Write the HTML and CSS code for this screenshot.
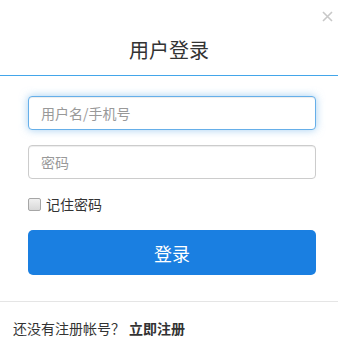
FILE: index.html
```html
<!DOCTYPE html>
<html lang="zh-CN">
<head>
<meta charset="utf-8">
<title>用户登录</title>
<link rel="stylesheet" href="styles.css">
</head>
<body>
<div class="modal">
  <div class="modal-header">
    <h2 class="title">用户登录</h2>
    <span class="close"><svg width="11" height="11" viewBox="0 0 11 11"><path d="M1 1L10 10M10 1L1 10" stroke="#c8c8c8" stroke-width="1.6" fill="none"/></svg></span>
  </div>
  <form class="modal-body">
    <input class="field focus" type="text" placeholder="用户名/手机号">
    <input class="field" type="password" placeholder="密码">
    <label class="remember"><input class="check" type="checkbox"><span>记住密码</span></label>
    <button class="btn" type="button">登录</button>
  </form>
  <div class="modal-footer">
    <span class="hint">还没有注册帐号？</span><a class="reg" href="#">立即注册</a>
  </div>
</div>
</body>
</html>
```
FILE: styles.css
```css
* { box-sizing: border-box; }
html, body { margin: 0; padding: 0; background: #fff; }
body {
  font-family: "Noto Sans CJK SC", "Microsoft YaHei", sans-serif;
  color: #333;
  width: 338px;
  height: 347px;
  overflow: hidden;
}
.modal { width: 338px; }
.modal-header {
  position: relative;
  height: 76px;
  padding-top: 32px;
  border-bottom: 1px solid #43a6ea;
}
.title {
  margin: 0;
  font-size: 20px;
  font-weight: normal;
  line-height: 36px;
  text-align: center;
  color: #333;
}
.close {
  position: absolute;
  right: 5px;
  top: 11px;
  width: 11px;
  height: 11px;
  display: block;
}
.close svg { display: block; }
.modal-body {
  display: flex;
  flex-direction: column;
  margin: 0;
  padding: 20px 22px 0 28px;
}
.field {
  height: 34px;
  width: 288px;
  padding: 6px 12px;
  font-family: inherit;
  font-size: 14px;
  color: #555;
  border: 1px solid #ccc;
  border-radius: 4px;
  outline: none;
  box-shadow: inset 0 1px 1px rgba(0,0,0,.075);
}
.field + .field { margin-top: 15px; }
.field::placeholder { color: #999; }
.field.focus {
  border-color: #66afe9;
  box-shadow: inset 0 1px 1px rgba(0,0,0,.075), 0 0 8px rgba(102,175,233,.6);
}
.remember {
  display: flex;
  align-items: center;
  gap: 5px;
  margin-top: 15px;
  height: 20px;
  font-size: 14px;
  color: #333;
}
.check {
  appearance: none;
  -webkit-appearance: none;
  margin: 0;
  width: 13px;
  height: 13px;
  border: 1px solid #a6a6a6;
  border-radius: 2px;
  background: linear-gradient(#f0f0f0, #d8d8d8);
}
.btn {
  margin-top: 16px;
  height: 45px;
  width: 288px;
  border: none;
  border-radius: 5px;
  background: #1a7fe1;
  color: #fff;
  font-family: inherit;
  font-size: 18px;
}
.modal-footer {
  margin-top: 26px;
  border-top: 1px solid #e5e5e5;
  padding: 16px 0 0 13px;
  font-size: 14px;
  line-height: 20px;
  display: flex;
  gap: 4px;
}
.hint { color: #333; }
.reg { color: #333; font-weight: bold; text-decoration: none; }
```
